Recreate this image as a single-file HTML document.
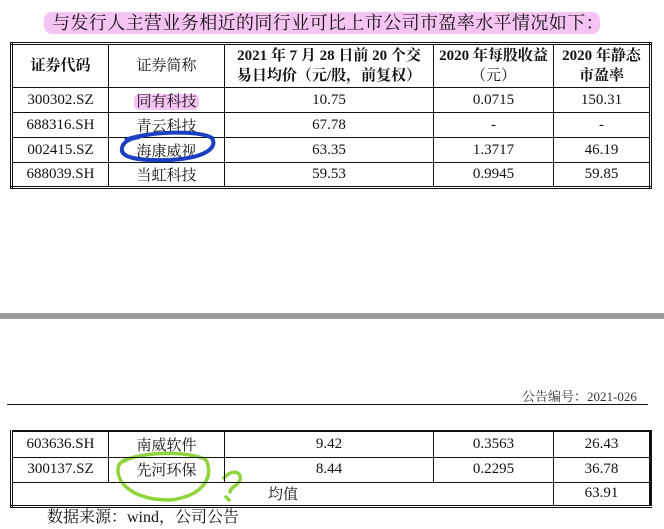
<!DOCTYPE html>
<html><head><meta charset="utf-8"><style>
body{margin:0;width:664px;height:529px;background:#fff;position:relative;overflow:hidden;font-family:"Liberation Serif","Noto Serif CJK SC",serif;color:#111}
.a{position:absolute}
table{position:absolute;border-collapse:collapse;font-size:15px;table-layout:fixed}
td{border:1px solid #111;text-align:center;padding:0;overflow:hidden;white-space:nowrap}
.t1{left:10px;top:42px;width:642px;border:3px double #111}
.t2{left:10px;top:430px;width:642px;border:3px double #111;border-top:2px solid #111;border-right:3px solid #111}
th{font-weight:bold;border:1px solid #111;font-size:15px;line-height:20px}
</style></head><body>
<div class="a" style="left:44px;top:12px;width:556px;height:22px;background:#f6c4f2;border-radius:8px"></div>
<div class="a" style="left:52px;top:12px;font-size:18px;line-height:22px;letter-spacing:0.4px">与发行人主营业务相近的同行业可比上市公司市盈率水平情况如下：</div>
<table class="t1">
<colgroup><col style="width:97px"><col style="width:116px"><col style="width:209px"><col style="width:120px"><col style="width:97px"></colgroup>
<tr style="height:43px"><th>证券代码</th><th style="font-weight:normal">证券简称</th><th>2021 年 7 月 28 日前 20 个交<br>易日均价（元/股，前复权）</th><th>2020 年每股收益<br><span style="font-weight:normal">（元）</span></th><th>2020 年静态<br>市盈率</th></tr>
<tr style="height:25px"><td>300302.SZ</td><td><span style="background:#f6c4f2;border-radius:5px;padding:0 2px">同有科技</span></td><td>10.75</td><td>0.0715</td><td>150.31</td></tr>
<tr style="height:25px"><td>688316.SH</td><td>青云科技</td><td>67.78</td><td>-</td><td>-</td></tr>
<tr style="height:25px"><td>002415.SZ</td><td>海康威视</td><td>63.35</td><td>1.3717</td><td>46.19</td></tr>
<tr style="height:25px"><td>688039.SH</td><td>当虹科技</td><td>59.53</td><td>0.9945</td><td>59.85</td></tr>
</table>
<svg class="a" style="left:0;top:0" width="664" height="529">
<path d="M125 140 C150 131 200 130 212 138 C218 148 205 158 170 160 C135 161 120 157 122 148 C123 142 130 138 140 137" fill="none" stroke="#1a3fc0" stroke-width="4"/>
<path d="M123 462 C135 452 190 450 206 460 C214 475 205 496 170 500 C135 500 118 485 118 470 C118 462 125 459 132 458" fill="none" stroke="#8ed43a" stroke-width="3.5"/>
<path d="M224 478 C230 470 242 470 240 480 C238 486 230 487 230 492 M226 497 L229 500" fill="none" stroke="#8ed43a" stroke-width="3.5" stroke-linecap="round"/>
</svg>
<div class="a" style="left:0;top:313px;width:664px;height:6px;background:#9a9a9a"></div>
<div class="a" style="left:522px;top:386px;font-size:13px;color:#333">公告编号：2021-026</div>
<div class="a" style="left:7px;top:404px;width:641px;height:1px;background:#111"></div>
<table class="t2">
<colgroup><col style="width:97px"><col style="width:116px"><col style="width:209px"><col style="width:120px"><col style="width:97px"></colgroup>
<tr style="height:26px"><td>603636.SH</td><td>南威软件</td><td>9.42</td><td>0.3563</td><td>26.43</td></tr>
<tr style="height:25px"><td>300137.SZ</td><td>先河环保</td><td>8.44</td><td>0.2295</td><td>36.78</td></tr>
<tr style="height:24px"><td colspan="4">均值</td><td>63.91</td></tr>
</table>
<div class="a" style="left:47px;top:507px;font-size:16px;line-height:22px">数据来源：wind，公司公告</div>
</body></html>
